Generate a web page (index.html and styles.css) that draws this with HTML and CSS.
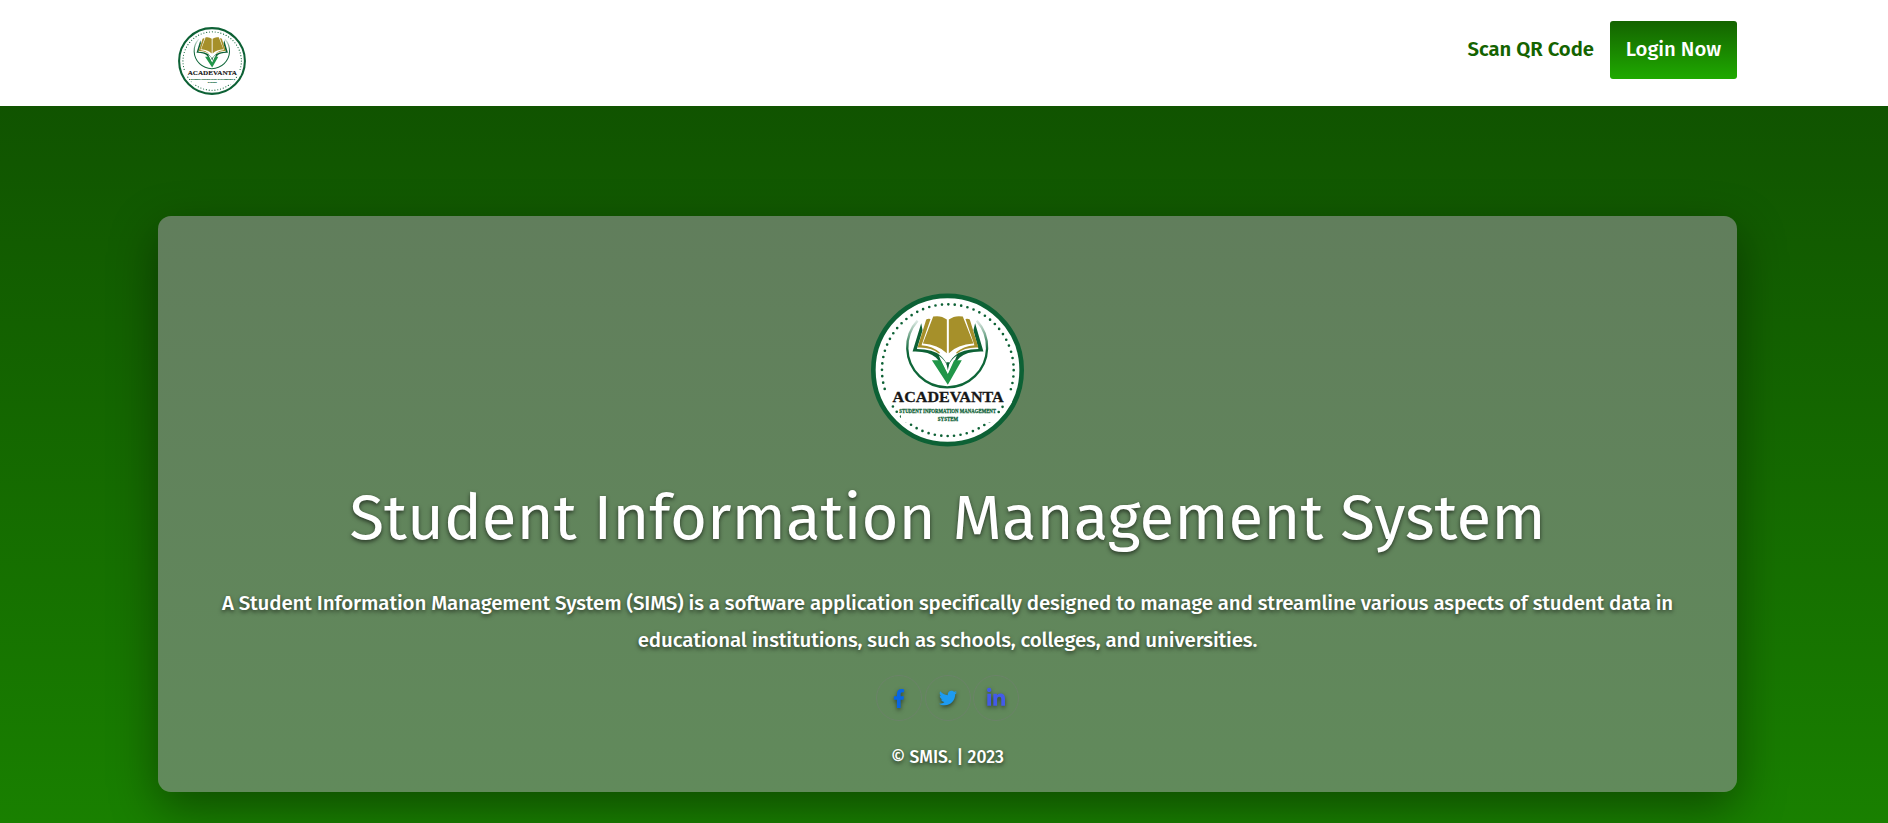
FILE: index.html
```html
<!DOCTYPE html>
<html lang="en">
<head>
<meta charset="utf-8">
<title>Student Information Management System</title>
<link rel="stylesheet" href="styles.css">
</head>
<body>
<svg class="defs" aria-hidden="true">
  <defs>
    <linearGradient id="fade" gradientUnits="userSpaceOnUse" x1="0" y1="118" x2="0" y2="210">
      <stop offset="0" stop-color="#0e6638" stop-opacity="0.100"/>
      <stop offset="1" stop-color="#0e6638"/>
    </linearGradient>
    <symbol id="logo" viewBox="32 39 460 461">
      <circle cx="262" cy="269.500" r="223" fill="#fff" stroke="#0d6135" stroke-width="14"/>
      <circle cx="263" cy="270" r="198" fill="none" stroke="#0d6135" stroke-width="8" stroke-linecap="round" stroke-dasharray="0 19.440"/>
      <path d="M172 121A120 120 0 1 0 350 121" fill="none" stroke="url(#fade)" stroke-width="7"/>
      <path d="M183 129L157 214Q205 212 227 232Q240 244 246 268L263 290L280 268Q286 244 299 232Q320 212 370 214L345 129L340 150L355 206Q306 206 285 226Q268 240 263 261Q257 240 240 226Q220 206 170 206L187 150Z" fill="#0d6135"/>
      <path d="M211 116Q203 114 198 118L172 202Q212 200 237 221L239 217Q218 198 184 195Z M316 116Q324 114 329 118L355 202Q314 200 290 221L288 217Q309 198 343 195Z" fill="#a6902a"/>
      <path d="M219 109Q242 104 260 118V219Q233 193 188 190Z M308 109Q285 104 266 118V219Q292 193 340 190Z" fill="#a6902a"/>
      <path d="M236 226Q256 240 263 262Q270 240 290 226L282 246L263 284L244 246Z" fill="#fff"/>
      <path d="M258 246H268L263 270Z" fill="#0d6135"/>
      <path d="M215 240H242L263 282L282 240H305L263 314Z" fill="#219649"/>
      <path d="M72 332H455V369H72Z" fill="#fff"/>
      <path d="M122 378H408V426H122Z" fill="#fff"/>
      <text class="logo-name" x="97" y="366" textLength="334" lengthAdjust="spacingAndGlyphs">ACADEVANTA</text>
      <text class="logo-sub" x="117" y="398" textLength="291" lengthAdjust="spacingAndGlyphs">STUDENT INFORMATION MANAGEMENT</text>
      <text class="logo-sub" x="233" y="422" textLength="61" lengthAdjust="spacingAndGlyphs">SYSTEM</text>
    </symbol>
  </defs>
</svg>
<header class="topbar">
  <div class="container topbar-row">
    <svg class="brand"><use href="#logo"/></svg>
    <nav class="nav">
      <a class="scan">Scan QR Code</a>
      <a class="login">Login Now</a>
    </nav>
  </div>
</header>
<main class="container card">
  <svg class="emblem"><use href="#logo"/></svg>
  <h1 class="title">Student Information Management System</h1>
  <p class="lead">A Student Information Management System (SIMS) is a software application specifically designed to manage and streamline various aspects of student data in<br>educational institutions, such as schools, colleges, and universities.</p>
  <div class="social">
    <a class="round"><svg viewBox="0 0 320 512" width="12" height="19"><path fill="#0866e4" d="M279 288l14-93h-89v-60c0-25 12-50 52-50h41V7s-37-7-72-7c-73 0-121 45-121 125v70H23v93h81v224h100V288z"/></svg></a>
    <a class="round"><svg viewBox="0 0 512 512" width="18" height="18"><path fill="#1d9bf0" d="M459 152c0 4 0 9 0 14 0 138-105 298-298 298-59 0-114-17-161-47 8 1 16 1 25 1 49 0 94-16 130-45-46-1-85-31-98-73 7 1 13 2 20 2 9 0 19-1 28-4-48-10-84-52-84-103v-1c14 8 30 13 47 13-28-19-46-51-46-87 0-19 5-37 14-53 52 64 129 105 216 110-2-8-3-16-3-24 0-58 47-105 105-105 30 0 58 13 77 33 24-5 46-13 66-25-8 24-24 45-46 58 21-2 42-8 60-16-14 21-32 39-52 54z"/></svg></a>
    <a class="round"><svg viewBox="0 0 448 448" width="18" height="18"><path fill="#435be8" d="M100 416H7V117h93zM54 76C24 76 0 51 0 22a54 54 0 0 1 108 0c0 29-25 54-54 54zM448 416h-93V270c0-34-1-79-48-79-49 0-56 38-56 77v148h-93V117h89v41h1c13-24 43-48 88-48 94 0 112 62 112 142z"/></svg></a>
  </div>
  <p class="copy">© SMIS. | 2023</p>
</main>
</body>
</html>
```
FILE: styles.css
```css
* { box-sizing: border-box; }
body {
  margin: 0;
  height: 823px;
  overflow: hidden;
  background: linear-gradient(#0f4d00, #198000);
  font-family: "Fira Sans", "Noto Sans", sans-serif;
  font-weight: 500;
}
.defs { position: absolute; width: 0; height: 0; }
.container { width: 1579px; margin-left: 158px; }
.topbar { height: 106px; background: #fff; }
.topbar-row { display: flex; justify-content: space-between; align-items: flex-start; padding: 21px 0 0 19.500px; }
.brand { width: 68px; height: 68px; margin-top: 6px; }
.nav { display: flex; align-items: center; gap: 16px; }
.nav a { white-space: nowrap; height: 58px; line-height: 56px; font-size: 20.300px; }
.scan { color: #146300; font-weight: 600; }
.login {
  width: 127px;
  text-align: center;
  color: #fff;
  border-radius: 3px;
  background: linear-gradient(#146300, #1fa900);
}
.card {
  height: 576px;
  margin-top: 110px;
  padding-top: 77px;
  display: flex;
  flex-direction: column;
  align-items: center;
  border-radius: 13px;
  background: linear-gradient(#617e5c, #618a5b);
  box-shadow: 0 16px 48px rgba(0, 0, 0, .4);
  color: #fff;
  text-align: center;
  text-shadow: 0 2px 4px rgba(0, 0, 0, .6);
}
.emblem { width: 153px; height: 154px; flex: none; }
.title {
  margin: 33px 0 0;
  font-size: 63.500px;
  line-height: 77px;
  font-weight: 400;
  white-space: nowrap;
}
.lead { margin: 28px 0 0; font-size: 20.500px; letter-spacing: -.140px; line-height: 37px; white-space: nowrap; }
.social { display: flex; gap: 2.500px; margin-top: 16px; }
.round {
  width: 46px;
  height: 46px;
  display: flex;
  align-items: center;
  justify-content: center;
  border: 1px solid #6b8368;
  border-radius: 50%;
}
.round svg { overflow: visible; filter: drop-shadow(0 2px 2px rgba(0, 0, 0, .5)); }
.copy { margin: 23px 0 0; font-size: 17.500px; line-height: 27px; white-space: nowrap; }
.logo-name { font: 700 46px "Liberation Serif", serif; fill: #171717; stroke: #171717; stroke-width: .8px; text-shadow: none; }
.logo-sub { font: 700 18px "Liberation Serif", serif; fill: #0d6135; stroke: #0d6135; stroke-width: .8px; text-shadow: none; }
```
